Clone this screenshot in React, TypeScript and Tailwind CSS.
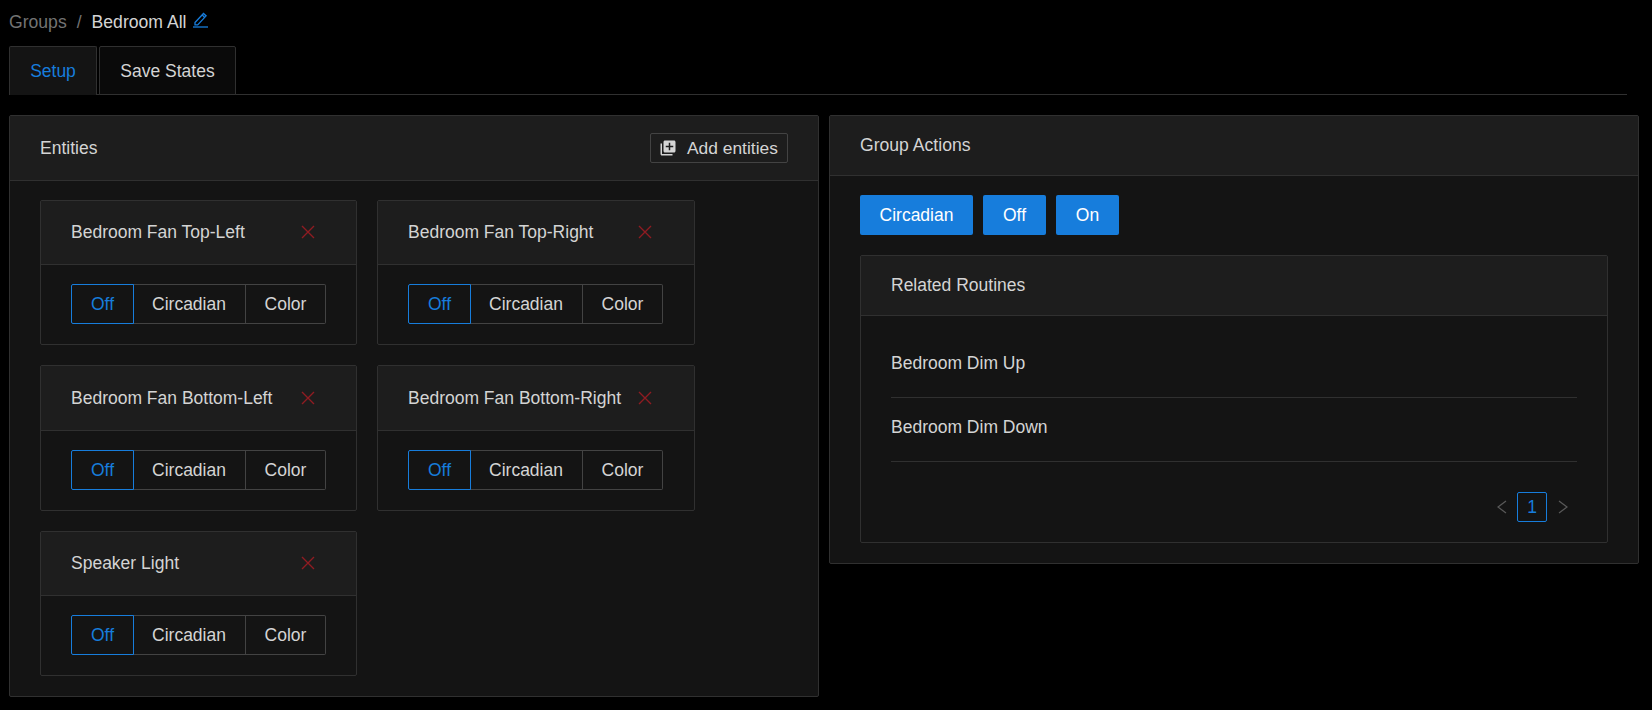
import { MdLibraryAdd } from 'react-icons/md'

const entities = [
  'Bedroom Fan Top-Left',
  'Bedroom Fan Top-Right',
  'Bedroom Fan Bottom-Left',
  'Bedroom Fan Bottom-Right',
  'Speaker Light',
]

function EntityCard({ name }: { name: string }) {
  return (
    <div className="h-[145.3px] rounded-[2px] border border-[#303030] bg-[#141414]">
      <div className="flex h-[64.5px] items-center border-b border-[#303030] bg-[#1d1d1d] pb-[1px] pl-[30px]">
        <span className="w-[230px] whitespace-nowrap">{name}</span>
        <svg width="14" height="14" viewBox="0 0 14 14" fill="none" stroke="#8f1c22" strokeWidth="1.4">
          <path d="M1 1l12 12M13 1L1 13" />
        </svg>
      </div>
      <div className="pl-[30px] pt-[18.9px]">
        <div className="flex h-[40px]">
          <div className="z-10 flex w-[63px] items-center justify-center rounded-l-[2px] border border-[#177ddc] text-[#177ddc]">Off</div>
          <div className="ml-[-1px] flex w-[113px] items-center justify-center border-y border-r border-[#434343]">Circadian</div>
          <div className="flex w-[80px] items-center justify-center rounded-r-[2px] border-y border-r border-[#434343]">Color</div>
        </div>
      </div>
    </div>
  )
}

export default function App() {
  return (
    <div className="min-h-screen bg-black pl-[9px] pr-[13px] text-[17.5px] leading-[24px] text-[#d4d4d4] [font-family:'Liberation_Sans',Arial,sans-serif]">
      <div className="flex h-[46px] items-center pb-[2px] text-[17.6px]">
        <span className="text-[#737373]">Groups</span>
        <span className="mx-[10px] text-[#737373]">/</span>
        <span>Bedroom All</span>
        <svg width="17" height="17" viewBox="0 0 17 17" className="ml-[6px] mt-[-5px]" fill="none" stroke="#177ddc" strokeWidth="1.3">
          <path d="M3 11.5L11.5 2.5l2.6 2.4-8.4 9H3z M10.2 4l2.6 2.4" />
          <path d="M1 16h15" />
        </svg>
      </div>

      <div className="mr-[12px] flex h-[49px] items-stretch gap-[2px] border-b border-[#303030]">
        <div className="mb-[-1px] flex w-[88px] items-center justify-center rounded-t-[2px] border border-b-0 border-[#303030] bg-[#141414] text-[#177ddc]">Setup</div>
        <div className="mb-[-1px] flex w-[137px] items-center justify-center rounded-t-[2px] border border-[#303030] bg-[#0a0a0a]">Save States</div>
      </div>

      <div className="mt-[20px] grid grid-cols-2 items-start gap-[10px]">
        <section className="h-[582px] rounded-[2px] border border-[#303030] bg-[#141414]">
          <div className="flex h-[65px] items-center justify-between border-b border-[#303030] bg-[#1d1d1d] px-[30px]">
            <span>Entities</span>
            <div className="flex h-[30px] w-[138px] items-center gap-[10px] rounded-[2px] border border-[#434343] pl-[8px]">
              <MdLibraryAdd size={18} className="text-[#d4d4d4]" />
              <span className="text-[17.4px]">Add entities</span>
            </div>
          </div>
          <div className="grid grid-cols-[317px_318px] gap-x-[20px] gap-y-[20.4px] px-[30px] pb-[19px] pt-[18.6px]">
            {entities.map((name) => (
              <EntityCard key={name} name={name} />
            ))}
          </div>
        </section>

        <section className="h-[449px] rounded-[2px] border border-[#303030] bg-[#141414]">
          <div className="flex h-[60px] items-center border-b border-[#303030] bg-[#1d1d1d] pb-[1px] pl-[30px] text-[17.6px]">
            <span>Group Actions</span>
          </div>
          <div className="flex flex-col gap-[20px] px-[30px] pt-[19px]">
            <div className="flex gap-[10px] text-white">
              <div className="flex h-[40px] w-[113px] items-center justify-center rounded-[2px] bg-[#177ddc]">Circadian</div>
              <div className="flex h-[40px] w-[63px] items-center justify-center rounded-[2px] bg-[#177ddc]">Off</div>
              <div className="flex h-[40px] w-[63px] items-center justify-center rounded-[2px] bg-[#177ddc]">On</div>
            </div>
            <div className="h-[288px] rounded-[2px] border border-[#303030]">
              <div className="flex h-[60px] items-center border-b border-[#303030] bg-[#1d1d1d] pb-[1px] pl-[30px]">Related Routines</div>
              <div className="px-[30px] pt-[17.5px]">
                <div className="flex h-[64.5px] items-center border-b border-[#303030] pb-[5px]">Bedroom Dim Up</div>
                <div className="flex h-[64px] items-center border-b border-[#303030] pb-[5px]">Bedroom Dim Down</div>
                <div className="mt-[30px] flex items-center justify-end gap-[10px] pr-[9px]">
                  <svg width="10" height="14" viewBox="0 0 10 14" fill="none" stroke="#5a5a5a" strokeWidth="1.2">
                    <path d="M9 1L1 7l8 6" />
                  </svg>
                  <div className="flex h-[30px] w-[30px] items-center justify-center rounded-[2px] border border-[#177ddc] text-[#177ddc]">1</div>
                  <svg width="10" height="14" viewBox="0 0 10 14" fill="none" stroke="#5a5a5a" strokeWidth="1.2" className="ml-[1px]">
                    <path d="M1 1l8 6-8 6" />
                  </svg>
                </div>
              </div>
            </div>
          </div>
        </section>
      </div>
    </div>
  )
}
